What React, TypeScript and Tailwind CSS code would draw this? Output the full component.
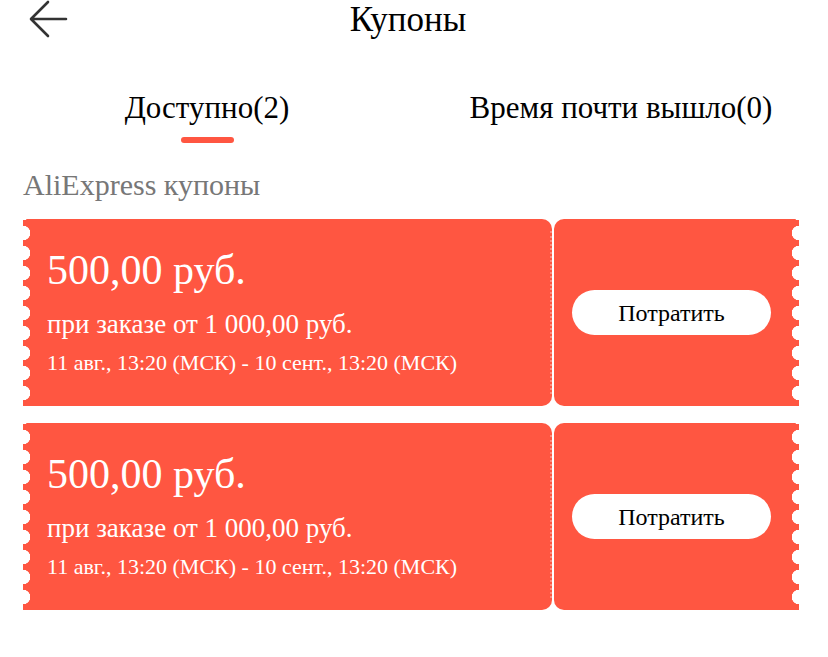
import { useState } from "react";

type Coupon = {
  id: number;
  amount: string;
  condition: string;
  period: string;
};

const coupons: Coupon[] = [
  {
    id: 1,
    amount: "500,00 руб.",
    condition: "при заказе от 1 000,00 руб.",
    period: "11 авг., 13:20 (МСК) - 10 сент., 13:20 (МСК)",
  },
  {
    id: 2,
    amount: "500,00 руб.",
    condition: "при заказе от 1 000,00 руб.",
    period: "11 авг., 13:20 (МСК) - 10 сент., 13:20 (МСК)",
  },
];

function BackArrow() {
  return (
    <svg width="40" height="40" viewBox="0 0 40 40" fill="none">
      <path
        d="M38 19H4M20 2L3 19l17 17"
        stroke="#333"
        strokeWidth="2.6"
        strokeLinecap="round"
        strokeLinejoin="round"
      />
    </svg>
  );
}

function CouponCard({ coupon }: { coupon: Coupon }) {
  return (
    <div className="flex h-[187px] gap-[2px]">
      <div className="relative flex-1 rounded-r-[10px] bg-[#ff5641] pl-[24px] pt-[27px] text-white">
        {/* perforated left edge */}
        <span className="absolute left-0 top-0 h-full w-[8px] bg-[radial-gradient(circle_at_0_10px,#fff_7px,transparent_7.5px)] bg-[length:8px_20px] bg-[position:0_4px] bg-repeat-y" />
        {/* tear line */}
        <span className="absolute right-0 top-[12px] bottom-[12px] border-r-2 border-dotted border-white/30" />
        <div className="text-[42px] leading-[48px]">{coupon.amount}</div>
        <div className="mt-[14px] text-[27px] leading-[32px]">{coupon.condition}</div>
        <div className="mt-[9px] text-[22px] leading-[28px]">{coupon.period}</div>
      </div>
      <div className="relative flex w-[245px] items-center rounded-l-[10px] bg-[#ff5641] pl-[18px]">
        <span className="absolute right-0 top-0 h-full w-[8px] bg-[radial-gradient(circle_at_100%_10px,#fff_7px,transparent_7.5px)] bg-[length:8px_20px] bg-[position:0_4px] bg-repeat-y" />
        <button className="h-[45px] w-[199px] rounded-full bg-white text-[24px] text-black">
          Потратить
        </button>
      </div>
    </div>
  );
}

export default function App() {
  const [tab, setTab] = useState(0);

  return (
    <div className="min-h-[657px] w-[828px] bg-white font-['Liberation_Serif',serif] text-black">
      <header className="grid h-[40px] grid-cols-[1fr_auto_1fr] items-center">
        <div className="pl-[28px]">
          <BackArrow />
        </div>
        <h1 className="pr-[12px] text-[35px] leading-[40px]">Купоны</h1>
        <div />
      </header>

      <nav className="mt-[48px] grid grid-cols-2">
        {["Доступно(2)", "Время почти вышло(0)"].map((label, i) => (
          <button
            key={label}
            onClick={() => setTab(i)}
            className="flex flex-col items-center"
          >
            <span className="text-[31px] leading-[40px]">{label}</span>
            <span
              className={
                tab === i
                  ? "mt-[9px] h-[6px] w-[53px] rounded-full bg-[#ff5641]"
                  : "mt-[9px] h-[6px] w-[53px]"
              }
            />
          </button>
        ))}
      </nav>

      <div className="mt-[26px] pl-[23px] text-[30px] leading-[32px] text-[#777]">
        AliExpress купоны
      </div>

      <div className="mt-[18px] flex flex-col gap-[17px] pl-[23px] pr-[29px]">
        {coupons.map((c) => (
          <CouponCard key={c.id} coupon={c} />
        ))}
      </div>
    </div>
  );
}
